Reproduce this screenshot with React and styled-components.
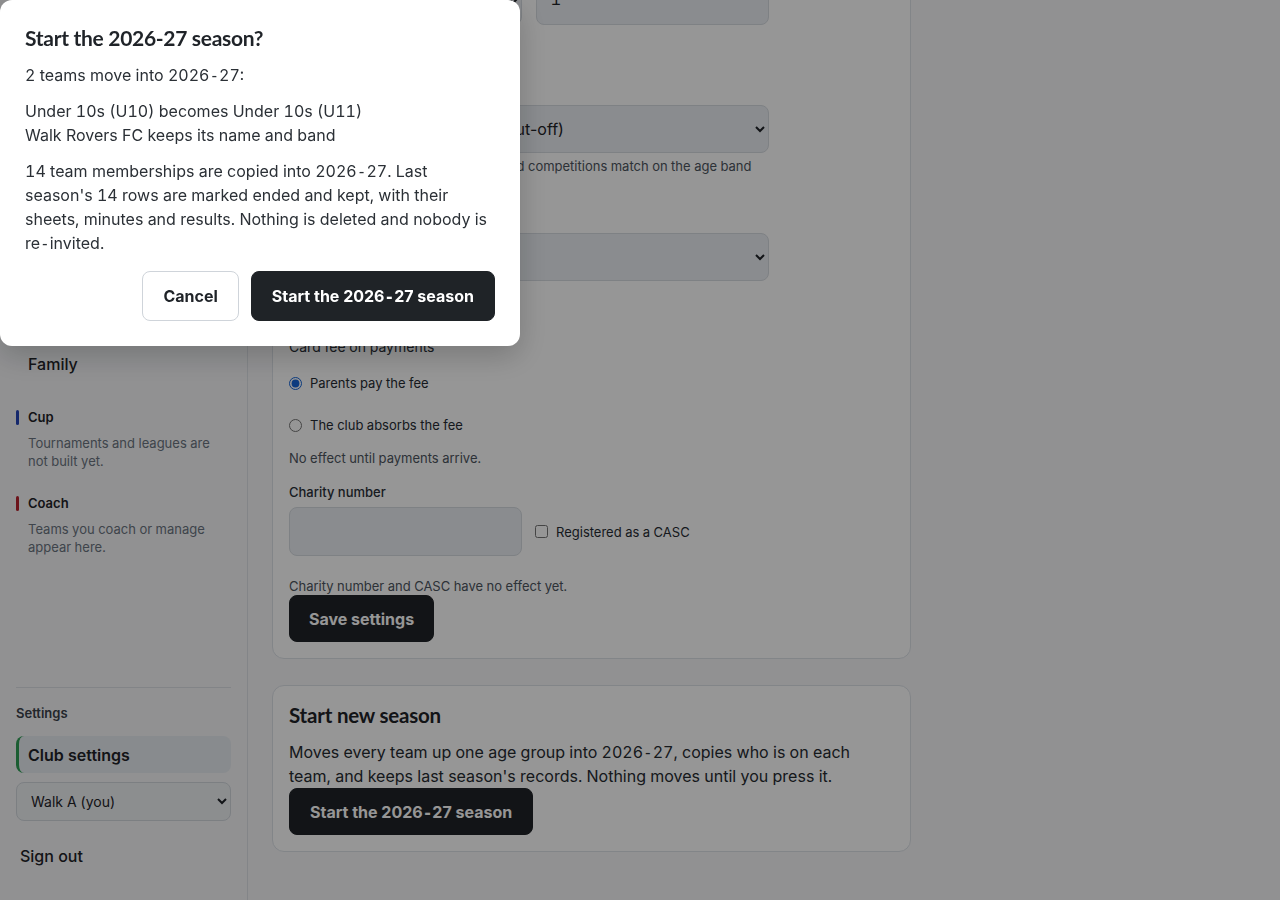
import React, { useLayoutEffect, useRef } from "react";
import styled, { createGlobalStyle } from "styled-components";

const GlobalStyle = createGlobalStyle`
  html, body { margin: 0; padding: 0; height: 100%; overflow: hidden; }
  body {
    font-family: Inter, "Noto Sans", sans-serif;
    font-feature-settings: "tnum";
    color: #1f2328;
    background: #f7f7f9;
  }
  *, *::before, *::after { box-sizing: border-box; }
`;

const Dash = styled.span`
  font-family: "DejaVu Sans Mono", "Liberation Mono", monospace;
  font-weight: inherit;
  line-height: 0;
`;

const NbHyphen = () => <Dash>{"\u2011"}</Dash>;

const Season = () => (
  <>
    2026<NbHyphen />27
  </>
);

const Shell = styled.div`
  display: grid;
  grid-template-columns: 248px 1fr;
  height: 100vh;
`;

const Sidebar = styled.aside`
  display: flex;
  flex-direction: column;
  height: 100vh;
  padding: 16px 16px 28px;
  background: #f6f7f9;
  border-right: 1px solid #dfe3e8;
`;

const Brand = styled.div`
  display: flex;
  flex-direction: column;
  gap: 2px;
  margin-bottom: 22px;
`;

const BrandName = styled.div`
  font-family: Lato, Inter, sans-serif;
  font-weight: 700;
  font-size: 20px;
  line-height: 28px;
`;

const BrandSub = styled.div`
  font-size: 13px;
  line-height: 18px;
  color: #68707a;
`;

const Groups = styled.nav`
  display: flex;
  flex-direction: column;
  gap: 24px;
`;

const Group = styled.div`
  display: flex;
  flex-direction: column;
`;

const GroupTitle = styled.div`
  position: relative;
  padding-left: 12px;
  font-size: 13px;
  line-height: 18px;
  font-weight: 600;
  color: #1f2328;
  &::before {
    content: "";
    position: absolute;
    left: 0;
    top: 2px;
    width: 3px;
    height: 15px;
    border-radius: 2px;
    background: ${(p) => p.$bar};
  }
`;

const GroupDesc = styled.p`
  margin: 8px 0 0;
  padding-left: 12px;
  font-size: 13px;
  line-height: 18px;
  color: #6b7480;
`;

const Links = styled.div`
  display: flex;
  flex-direction: column;
  margin: 6px 0 2px;
`;

const NavLink = styled.a`
  display: flex;
  align-items: center;
  height: 37px;
  font-size: 16px;
  font-weight: ${(p) => (p.$active ? 600 : 500)};
  color: #1f2328;
  text-decoration: none;
  border-radius: 8px;
  background: ${(p) => (p.$active ? "#e8ecf1" : "transparent")};
  border-left: ${(p) => (p.$active ? "3px solid #2f9e55" : "none")};
  padding-left: ${(p) => (p.$active ? "9px" : "12px")};
`;

const SidebarFoot = styled.div`
  margin-top: auto;
  border-top: 1px solid #dde1e6;
  padding-top: 16px;
  display: flex;
  flex-direction: column;
`;

const FootLabel = styled.div`
  font-size: 13px;
  line-height: 18px;
  font-weight: 600;
  color: #3a414a;
  margin-bottom: 14px;
`;

const UserSelect = styled.select`
  margin-top: 9px;
  height: 39px;
  width: 100%;
  padding: 0 8px 0 10px;
  font-family: Inter, sans-serif;
  font-size: 14px;
  color: #1f2328;
  background: #eef1f4;
  border: 1px solid #d3d8de;
  border-radius: 8px;
`;

const SignOut = styled.button`
  margin-top: 19px;
  align-self: flex-start;
  padding: 4px 4px;
  font-family: Inter, sans-serif;
  font-size: 16px;
  line-height: 24px;
  font-weight: 500;
  color: #1f2328;
  background: none;
  border: none;
`;

const Main = styled.main`
  height: 100vh;
  overflow-y: auto;
  padding: 24px 24px 96px;
  scrollbar-width: none;
  &::-webkit-scrollbar { display: none; }
`;

const Column = styled.div`
  display: flex;
  flex-direction: column;
  gap: 26px;
  width: 639px;
`;

const PageTitle = styled.h1`
  margin: 0 0 -6px;
  font-family: Lato, Inter, sans-serif;
  font-size: 28px;
  line-height: 36px;
  font-weight: 700;
`;

const Card = styled.section`
  display: flex;
  flex-direction: column;
  padding: 16px;
  background: #fff;
  border: 1px solid #dde2e8;
  border-radius: 12px;
`;

const CardTitle = styled.h2`
  margin: 0 0 12px;
  font-family: Lato, Inter, sans-serif;
  font-size: 20.5px;
  line-height: 26px;
  font-weight: 700;
  letter-spacing: -0.2px;
  color: #1f2328;
`;

const Field = styled.div`
  display: flex;
  flex-direction: column;
  margin-bottom: ${(p) => p.$mb ?? 34}px;
  max-width: 480px;
`;

const Label = styled.label`
  font-size: 13px;
  line-height: 18px;
  font-weight: 500;
  color: #2a3038;
  margin-top: ${(p) => p.$mt ?? 0}px;
  margin-bottom: 6px;
`;

const GroupLabel = styled.div`
  font-size: 14px;
  line-height: 18px;
  color: #2a3038;
  margin-bottom: 6px;
`;

const Pair = styled.div`
  display: grid;
  grid-template-columns: 1fr 1fr;
  gap: 14px;
  max-width: 480px;
`;

const TextInput = styled.input`
  height: ${(p) => p.$h ?? 48}px;
  width: 100%;
  padding: 0 14px;
  font-family: ${(p) => (p.$mono ? '"Liberation Mono", monospace' : "Inter, sans-serif")};
  font-size: 16px;
  color: #1f2328;
  background: #eaeef3;
  border: 1px solid #d6dbe1;
  border-radius: 8px;
`;

const Select = styled.select`
  height: 48px;
  width: 100%;
  padding: 0 10px 0 14px;
  font-family: Inter, sans-serif;
  font-size: 16px;
  color: #1f2328;
  background: #eaeef3;
  border: 1px solid #d6dbe1;
  border-radius: 8px;
`;

const Help = styled.p`
  margin: ${(p) => p.$mt ?? 4}px 0 0;
  font-size: 13px;
  line-height: 18px;
  color: #4d5560;
  white-space: ${(p) => (p.$nowrap ? "nowrap" : "normal")};
`;

const RadioRow = styled.label`
  display: flex;
  align-items: center;
  gap: 8px;
  height: 42px;
  font-size: 13px;
  color: #262c33;
  input {
    margin: 0;
    width: 13px;
    height: 13px;
    accent-color: #1565d8;
  }
`;

const InlineRow = styled.div`
  display: flex;
  align-items: center;
  gap: 13px;
`;

const CheckLabel = styled.label`
  display: flex;
  align-items: center;
  gap: 8px;
  font-size: 13px;
  color: #262c33;
  white-space: nowrap;
  input { margin: 0; width: 13px; height: 13px; }
`;

const CharityBox = styled.div`
  width: 233px;
  flex: none;
`;

const Button = styled.button`
  align-self: flex-start;
  height: ${(p) => p.$h ?? 47}px;
  padding: 0 ${(p) => p.$px ?? 20}px;
  font-family: Inter, sans-serif;
  font-size: 16px;
  font-weight: 700;
  border-radius: 8px;
  cursor: pointer;
  color: ${(p) => (p.$variant === "ghost" ? "#1f2328" : "#ffffff")};
  background: ${(p) => (p.$variant === "ghost" ? "#ffffff" : "#1f2327")};
  border: 1px solid ${(p) => (p.$variant === "ghost" ? "#cfd4da" : "#1f2327")};
`;

const Body = styled.p`
  margin: 0;
  font-size: 16px;
  line-height: 24px;
  color: #262b31;
`;

const Backdrop = styled.div`
  position: fixed;
  inset: 0;
  background: rgba(0, 0, 0, 0.41);
`;

const Dialog = styled.div`
  position: fixed;
  top: 0;
  left: 0;
  width: 520px;
  padding: 24px 25px 25px;
  background: #fff;
  border-radius: 12px;
  box-shadow: 0 10px 30px rgba(0, 0, 0, 0.2);
  display: flex;
  flex-direction: column;
  gap: 12px;
`;

const DialogTitle = styled.h2`
  margin: 0 0 -1px;
  font-family: Lato, Inter, sans-serif;
  font-size: 21px;
  line-height: 28px;
  font-weight: 700;
  letter-spacing: -0.3px;
  color: #1f2328;
`;

const DialogText = styled.p`
  margin: 0;
  font-size: 16px;
  line-height: 24px;
  color: #2b3036;
`;

const Actions = styled.div`
  display: flex;
  justify-content: flex-end;
  gap: 12px;
  margin-top: 4px;
`;

export default function App() {
  const mainRef = useRef(null);
  useLayoutEffect(() => {
    if (mainRef.current) mainRef.current.scrollTop = 288;
  }, []);

  return (
    <>
      <GlobalStyle />
      <Shell>
        <Sidebar>
          <Brand>
            <BrandName>Walk Rovers FC</BrandName>
            <BrandSub>2025<NbHyphen />26 season</BrandSub>
          </Brand>
          <Groups>
            <Group>
              <GroupTitle $bar="#2f9e55">Club</GroupTitle>
              <Links>
                <NavLink href="#">Teams</NavLink>
                <NavLink href="#">People</NavLink>
                <NavLink href="#">Fixtures</NavLink>
              </Links>
            </Group>
            <Group>
              <GroupTitle $bar="#c77c1a">Parent</GroupTitle>
              <Links>
                <NavLink href="#">Children</NavLink>
                <NavLink href="#">Payments</NavLink>
                <NavLink href="#">Family</NavLink>
              </Links>
            </Group>
            <Group>
              <GroupTitle $bar="#2444b8">Cup</GroupTitle>
              <GroupDesc>Tournaments and leagues are not built yet.</GroupDesc>
            </Group>
            <Group>
              <GroupTitle $bar="#b8222e">Coach</GroupTitle>
              <GroupDesc>Teams you coach or manage appear here.</GroupDesc>
            </Group>
          </Groups>
          <SidebarFoot>
            <FootLabel>Settings</FootLabel>
            <NavLink href="#" $active>Club settings</NavLink>
            <UserSelect defaultValue="a">
              <option value="a">Walk A (you)</option>
            </UserSelect>
            <SignOut>Sign out</SignOut>
          </SidebarFoot>
        </Sidebar>

        <Main ref={mainRef}>
          <Column>
            <PageTitle>Club settings</PageTitle>
            <Card>
              <CardTitle>Club details</CardTitle>
              <Field>
                <Label>Club name</Label>
                <TextInput defaultValue="Walk Rovers FC" />
              </Field>
              <Field>
                <Pair>
                  <Label>Current season</Label>
                  <Label>Season starts in month</Label>
                </Pair>
                <Pair>
                  <Select defaultValue="s">
                    <option value="s">2025-26</option>
                  </Select>
                  <TextInput $mono defaultValue="1" />
                </Pair>
                <Help>Months are numbered 1 to 12.</Help>
              </Field>
              <Field>
                <Label>Age band rule</Label>
                <Select defaultValue="a">
                  <option value="a">School year (1 September cut-off)</option>
                </Select>
                <Help $nowrap>Sets which age group a team is in, and competitions match on the age band</Help>
              </Field>
              <Field $mb={35}>
                <Label>Default kit colour</Label>
                <Select defaultValue="k">
                  <option value="k">Navy</option>
                </Select>
                <Help>Shown on team sheets.</Help>
              </Field>
              <GroupLabel>Card fee on payments</GroupLabel>
              <RadioRow>
                <input type="radio" name="fee" defaultChecked />
                Parents pay the fee
              </RadioRow>
              <RadioRow>
                <input type="radio" name="fee" />
                The club absorbs the fee
              </RadioRow>
              <Help $mt={3}>No effect until payments arrive.</Help>
              <Label $mt={16}>Charity number</Label>
              <InlineRow>
                <CharityBox>
                  <TextInput $h={49} />
                </CharityBox>
                <CheckLabel>
                  <input type="checkbox" />
                  Registered as a CASC
                </CheckLabel>
              </InlineRow>
              <Help $mt={21}>Charity number and CASC have no effect yet.</Help>
              <Button $px={19}>Save settings</Button>
            </Card>

            <Card>
              <CardTitle>Start new season</CardTitle>
              <Body>
                Moves every team up one age group into <Season />, copies who is on each team, and keeps last season's records. Nothing moves until you press it.
              </Body>
              <Button>Start the <Season /> season</Button>
            </Card>
          </Column>
        </Main>
      </Shell>

      <Backdrop />
      <Dialog role="dialog" aria-modal="true">
        <DialogTitle>Start the 2026-27 season?</DialogTitle>
        <DialogText>2 teams move into <Season />:</DialogText>
        <DialogText>
          Under 10s (U10) becomes Under 10s (U11)
          <br />
          Walk Rovers FC keeps its name and band
        </DialogText>
        <DialogText>
          14 team memberships are copied into <Season />. Last season's 14 rows are marked ended and kept, with their sheets, minutes and results. Nothing is deleted and nobody is re<NbHyphen />invited.
        </DialogText>
        <Actions>
          <Button $variant="ghost" $h={50}>Cancel</Button>
          <Button $h={50}>Start the <Season /> season</Button>
        </Actions>
      </Dialog>
    </>
  );
}
